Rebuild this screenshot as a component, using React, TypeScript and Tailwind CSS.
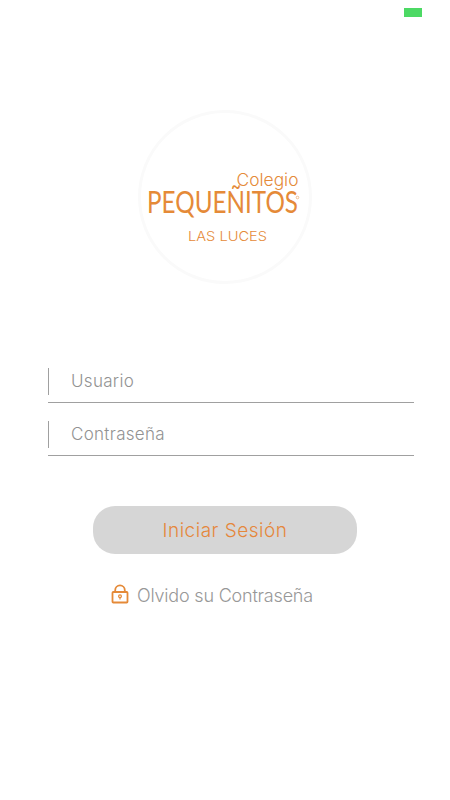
const ORANGE = '#e58a38';

function Logo() {
  return (
    <div className="h-[174px] w-[174px] rounded-full border-[3px] border-[#fafafa] bg-white">
      <svg
        width="168"
        height="168"
        viewBox="0 0 168 168"
        fill={ORANGE}
        fontFamily="Inter, 'Liberation Sans', sans-serif"
        className="overflow-visible"
      >
        <text x="95.500" y="73" fontSize="17" fontWeight="300" textLength="62" lengthAdjust="spacingAndGlyphs">
          Colegio
        </text>
        <text
          x="6"
          y="99.500"
          fontSize="30"
          fontFamily="Lato, 'Liberation Sans', sans-serif"
          textLength="151"
          lengthAdjust="spacingAndGlyphs"
        >
          PEQUEÑITOS
        </text>
        <circle cx="156.500" cy="84.500" r="1.300" fill="none" stroke={ORANGE} strokeWidth="0.500" />
        <text x="47" y="127.500" fontSize="13.500" fontWeight="300" textLength="79" lengthAdjust="spacingAndGlyphs">
          LAS LUCES
        </text>
      </svg>
    </div>
  );
}

function LockIcon() {
  return (
    <svg width="18" height="20" viewBox="0 0 18 20" fill="none" stroke={ORANGE} strokeWidth="1.800">
      <rect x="1.500" y="8" width="15" height="10.500" rx="0.800" />
      <path d="M4.200 8V6.200a4.800 4.800 0 0 1 9.600 0V8" />
      <circle cx="9" cy="12.300" r="1.400" strokeWidth="1.200" />
      <path d="M9 13.700v1.800" strokeWidth="1.200" />
    </svg>
  );
}

function Field({ label, type }: { label: string; type: string }) {
  return (
    <div className="h-[35px] border-b border-[#a0a0a0]">
      <div className="h-[27px] border-l border-[#a0a0a0] pl-[22px]">
        <input
          type={type}
          placeholder={label}
          className="block h-[26px] w-full bg-transparent text-[17px] font-light tracking-[0.3px] outline-none placeholder:text-[#929292]"
        />
      </div>
    </div>
  );
}

export default function App() {
  return (
    <main className="flex h-[800px] w-[450px] flex-col overflow-hidden bg-white font-['Inter','Liberation_Sans',sans-serif]">
      <div className="flex h-[110px] justify-end pt-2 pr-7">
        <div className="h-[9px] w-[18px] bg-[#4cd964]" />
      </div>

      <div className="flex justify-center">
        <Logo />
      </div>

      <form className="mt-[84px] flex flex-col pr-9 pl-12">
        <div className="flex flex-col gap-[18px]">
          <Field label="Usuario" type="text" />
          <Field label="Contraseña" type="password" />
        </div>
        <button
          type="button"
          className="mt-[50px] ml-[45px] h-12 w-[264px] rounded-[22px] bg-[#d6d6d6] pt-0.5 text-[19px] font-light tracking-[0.5px] text-[#e5873c]"
        >
          Iniciar Sesión
        </button>
      </form>

      <div className="mt-[30px] flex h-5 items-center gap-2 pl-[111px]">
        <LockIcon />
        <a className="pt-0.5 text-[18px] font-light tracking-[-0.2px] text-[#989898]">Olvido su Contraseña</a>
      </div>
    </main>
  );
}
